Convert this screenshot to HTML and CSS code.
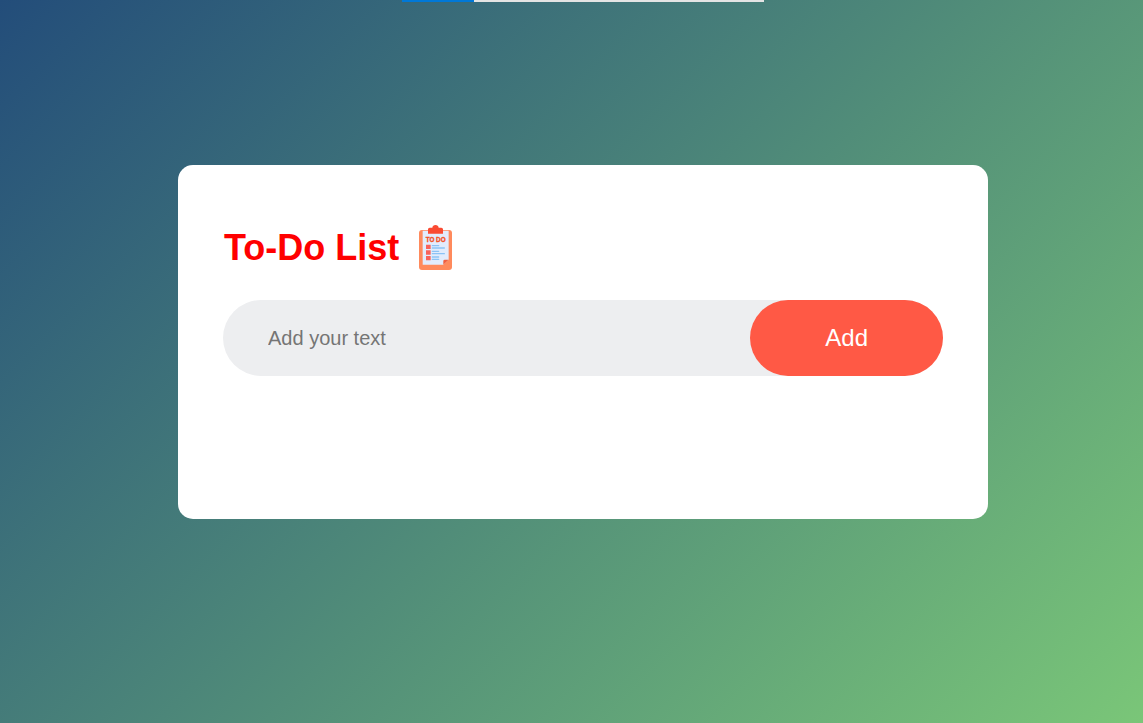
FILE: index.html
```html
<!DOCTYPE html>
<html lang="en">
<head>
<meta charset="utf-8">
<meta name="viewport" content="width=device-width, initial-scale=1">
<title>To-Do List</title>
<link rel="stylesheet" href="styles.css">
</head>
<body>
<div class="page">
  <div class="progress"><div class="progress-fill"></div></div>
  <main class="todo-app">
    <h1 class="title">To-Do List
      <svg class="title-icon" viewBox="27 20 99 135" aria-hidden="true">
        <rect x="27" y="35" width="99" height="120" rx="9" fill="#ff8a5c"/>
        <path d="M38 37h78v87l-16 15H38z" fill="#e2ecfc"/>
        <path d="M100 139v-11q0-4 4-4h12z" fill="#f2603f"/>
        <path d="M54 46V33q0-5 5-5h8q1-8 9.500-8t9.500 8h8q5 0 5 5v13z" fill="#fa4a32"/>
        <text class="icon-text" x="77" y="71" text-anchor="middle">TO DO</text>
        <path d="M48 79h14v13H48zM48 96h14v13H48zM48 113h14v13H48z" fill="#f8625a"/>
        <path d="M67 82h19M67 89h36M67 99h19M67 106h36M67 116h19M67 123h19" stroke="#8cc3f5" stroke-width="4" stroke-linecap="round"/>
      </svg>
    </h1>
    <form class="row">
      <input class="task-input" type="text" placeholder="Add your text" aria-label="Add your text">
      <button class="add-button" type="button">Add</button>
    </form>
  </main>
</div>
</body>
</html>
```
FILE: styles.css
```css
* {
  box-sizing: border-box;
}

body {
  margin: 0;
  font-family: "Liberation Sans", Arial, sans-serif;
}

.page {
  min-height: 100vh;
  padding: 0 0 24px 23px;
  background: linear-gradient(135deg, #234d7a, #7ac678);
}

.progress {
  width: 362px;
  height: 2px;
  margin: 0 auto;
  background: #e4e4e4;
}

.progress-fill {
  width: 20%;
  height: 100%;
  background: #0078d7;
}

.todo-app {
  width: 100%;
  max-width: 810px;
  margin: 163px auto 0;
  padding: 60px 45px 143px;
  border-radius: 15px;
  background: #fff;
}

.title {
  display: flex;
  align-items: center;
  gap: 20px;
  margin: 0 0 30px;
  padding-left: 1px;
  color: #f00;
  font-size: 36px;
  line-height: 45px;
}

.title-icon {
  width: 33px;
  height: 45px;
}

.icon-text {
  fill: #f4511e;
  stroke: #f4511e;
  stroke-width: 1px;
  font-size: 19px;
  font-weight: bold;
}

.row {
  display: flex;
  border-radius: 38px;
  background: #edeef0;
}

.task-input {
  flex: 1;
  min-width: 0;
  padding: 0 0 0 45px;
  border: 0;
  outline: 0;
  background: transparent;
  font: 20px "Liberation Sans", Arial, sans-serif;
}

.task-input::placeholder {
  color: #757575;
}

.add-button {
  padding: 24px 75px;
  border: 0;
  border-radius: 38px;
  background: #ff5945;
  color: #fff;
  font: 24px/28px "Liberation Sans", Arial, sans-serif;
  cursor: pointer;
}
```
